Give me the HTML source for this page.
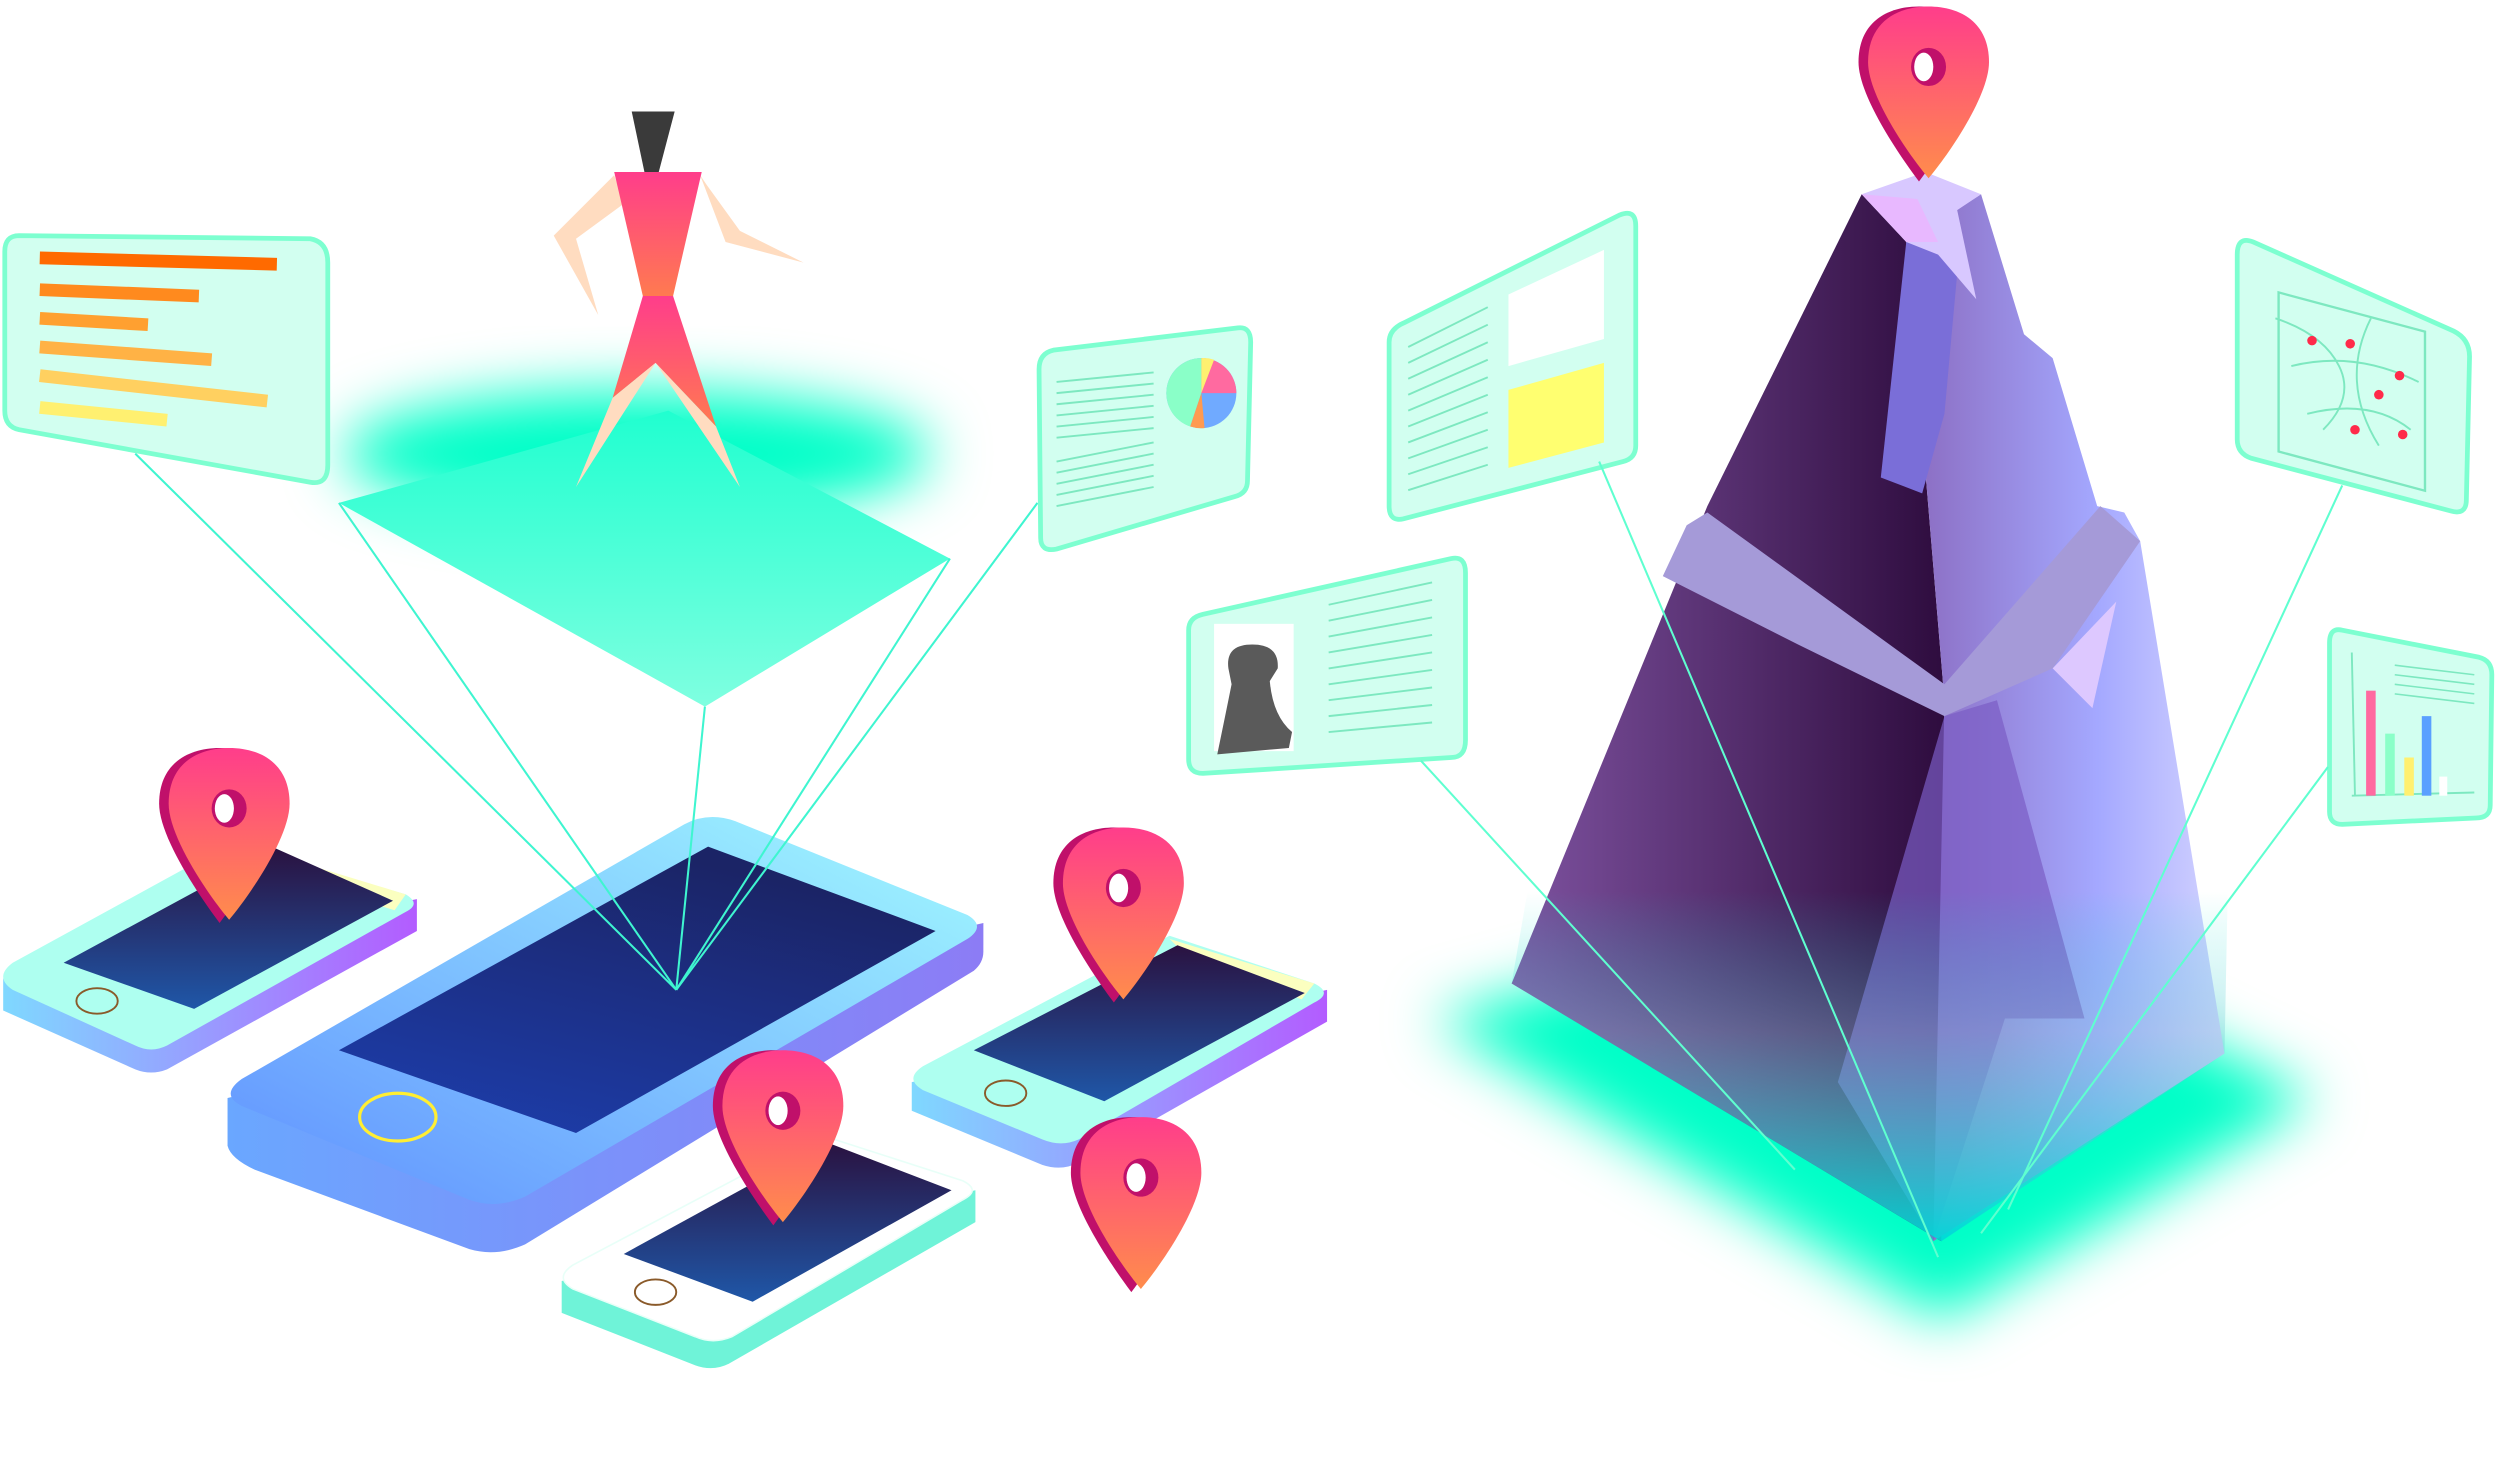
<!DOCTYPE html>
<html><head><meta charset="utf-8"><style>
html,body{margin:0;padding:0;background:#fff;width:2495px;height:1480px;overflow:hidden}
svg{display:block}
</style></head><body>
<svg width="2495" height="1480" viewBox="0 0 1568 930" xmlns="http://www.w3.org/2000/svg">
<defs>
<filter id="blur" x="-50%" y="-50%" width="200%" height="200%"><feGaussianBlur stdDeviation="18"/></filter>
<filter id="blur2" x="-50%" y="-50%" width="200%" height="200%"><feGaussianBlur stdDeviation="10"/></filter>
<linearGradient id="pin" x1="0" y1="0" x2="0" y2="1"><stop offset="0" stop-color="#ff3d8b"/><stop offset="1" stop-color="#ff8c4c"/></linearGradient>
<linearGradient id="screen" x1="0" y1="1" x2="0.5" y2="0"><stop offset="0" stop-color="#1d3fb0"/><stop offset="1" stop-color="#1b2466"/></linearGradient>
<linearGradient id="scr2" x1="0" y1="1" x2="0" y2="0"><stop offset="0" stop-color="#1f57a8"/><stop offset="1" stop-color="#2a1240"/></linearGradient>
<linearGradient id="tabSide" x1="0" y1="0" x2="1" y2="0"><stop offset="0" stop-color="#6aa7ff"/><stop offset="1" stop-color="#8c7cf5"/></linearGradient>
<linearGradient id="tabTop" x1="0" y1="1" x2="1" y2="0"><stop offset="0" stop-color="#5f8fff"/><stop offset="1" stop-color="#a2fbff"/></linearGradient>
<linearGradient id="phSide" x1="0" y1="0" x2="1" y2="0"><stop offset="0" stop-color="#7fd8ff"/><stop offset="1" stop-color="#b35cff"/></linearGradient>
<linearGradient id="dark" x1="0" y1="0" x2="1" y2="0"><stop offset="0" stop-color="#7e52a0"/><stop offset="1" stop-color="#2e0c3e"/></linearGradient>
<linearGradient id="light" x1="0" y1="0" x2="1" y2="0"><stop offset="0" stop-color="#8a6abf"/><stop offset="0.6" stop-color="#a4a8ff"/><stop offset="1" stop-color="#d4d4ff"/></linearGradient>
<linearGradient id="fade" x1="0" y1="0" x2="0" y2="1"><stop offset="0" stop-color="#00e5d0" stop-opacity="0"/><stop offset="0.4" stop-color="#7fc8d8" stop-opacity="0.35"/><stop offset="1" stop-color="#00d8d8" stop-opacity="0.95"/></linearGradient>
<linearGradient id="diam" x1="0" y1="0" x2="0" y2="1"><stop offset="0" stop-color="#20ffd0"/><stop offset="1" stop-color="#7fffe0"/></linearGradient>
<linearGradient id="fig" x1="0" y1="0" x2="0" y2="1"><stop offset="0" stop-color="#ff3d8b"/><stop offset="1" stop-color="#ff7a50"/></linearGradient>
<g id="pinG">
<path d="M-44,35 C-44,10 -26,0 -6,0 C14,0 32,10 32,35 C32,55 9,90 -6,110 C-21,90 -44,55 -44,35Z" fill="#c0106a"/>
<path d="M-38,35 C-38,10 -20,0 0,0 C20,0 38,10 38,35 C38,55 15,90 0,108 C-15,90 -38,55 -38,35Z" fill="url(#pin)"/>
<ellipse cx="0" cy="38" rx="11" ry="12" fill="#c0106a"/>
<ellipse cx="-3" cy="38" rx="6" ry="9" fill="#fff"/>
</g>
</defs>

<!-- left glow + diamond -->
<ellipse cx="400" cy="285" rx="185" ry="40" fill="#00ffc8" filter="url(#blur)"/>
<polygon points="213,316 420,258 597,351 443,444" fill="url(#diam)"/>

<!-- figure -->
<polygon points="397,70 424,70 414,108 405,108" fill="#3a3a3a"/>
<polygon points="386,110 348,148 376,198 362,150 392,128" fill="#ffdcc0"/>
<polygon points="440,110 456,152 505,165 465,145 444,116" fill="#ffdcc0"/>
<polygon points="386,108 441,108 423,186 404,186" fill="url(#fig)"/>
<polygon points="404,186 423,186 450,268 412,228 385,250" fill="url(#fig)"/>
<polygon points="385,250 412,228 362,306" fill="#ffdcc0"/>
<polygon points="412,228 450,268 465,306" fill="#ffdcc0"/>

<!-- mountain glow -->
<polygon points="900,640 1190,560 1455,690 1220,830" fill="#00ffc8" filter="url(#blur)"/>

<!-- mountain -->
<polygon points="1170,122 1198,152 1222,440 1220,780 950,618 1073,318" fill="url(#dark)"/>
<polygon points="1198,152 1245,122 1272,210 1290,225 1318,318 1335,322 1345,340 1398,662 1215,780 1222,440" fill="url(#light)"/>
<polygon points="1198,152 1232,150 1222,260 1208,310 1182,300" fill="#7a6ed8"/>
<polygon points="1222,450 1255,440 1310,640 1260,640 1215,780 1155,680" fill="#7b5cc4" opacity="0.7"/>
<polygon points="1045,362 1060,330 1073,322 1222,430 1320,318 1345,340 1290,420 1222,450 1130,405" fill="#a59ad8"/>
<polygon points="1290,420 1330,378 1315,445" fill="#ddc8ff"/>
<polygon points="1170,122 1210,108 1245,122 1230,132 1242,188 1218,160 1198,152" fill="#d8c8ff"/>
<polygon points="1170,122 1198,152 1218,152 1205,125" fill="#e8b8ff"/>
<polygon points="950,618 1220,780 1398,662 1400,560 960,560" fill="url(#fade)"/>
<use href="#pinG" x="1212" y="4"/>

<!-- left tablet -->
<path d="M143,690 L143,720 Q145,728 160,735 L295,785 Q312,790 330,782 L612,610 Q618,605 618,598 L618,580 Z" fill="url(#tabSide)"/>
<path d="M152,678 L430,518 Q445,510 462,516 L608,575 Q620,582 608,590 L330,752 Q312,760 295,754 L152,695 Q138,688 152,678Z" fill="url(#tabTop)"/>
<polygon points="213,660 445,532 588,585 362,712" fill="url(#screen)"/>
<ellipse cx="250" cy="702" rx="24" ry="15" fill="none" stroke="#ffee33" stroke-width="2"/>

<!-- left phone -->
<path d="M2,615 L2,635 L85,672 Q95,676 105,672 L262,585 L262,565Z" fill="url(#phSide)"/>
<path d="M8,605 L145,530 L255,562 Q265,568 255,573 L105,657 Q95,662 85,657 L8,622 Q-4,614 8,605Z" fill="#aefff0"/>
<polygon points="150,530 255,562 248,572 160,545" fill="#fbffc0"/>
<polygon points="40,605 173,533 247,566 122,634" fill="url(#scr2)"/>
<ellipse cx="61" cy="629" rx="13" ry="8" fill="none" stroke="#8a5a2a" stroke-width="1.2"/>

<!-- right phone -->
<path d="M573,680 L573,698 L655,732 Q667,736 677,731 L834,642 L834,622Z" fill="url(#phSide)"/>
<path d="M580,670 L735,588 L826,618 Q838,624 826,630 L678,716 Q667,721 655,716 L580,685 Q568,678 580,670Z" fill="#aefff0"/>
<polygon points="735,590 826,618 818,628 745,600" fill="#fbffc0"/>
<polygon points="612,660 740,594 820,624 694,692" fill="url(#scr2)"/>
<ellipse cx="632" cy="687" rx="13" ry="8" fill="none" stroke="#8a5a2a" stroke-width="1.2"/>

<!-- bottom phone -->
<path d="M353,805 L353,825 L437,858 Q448,862 458,857 L613,768 L613,748Z" fill="#6ff3d8"/>
<path d="M360,795 L515,713 L605,742 Q617,748 605,754 L460,840 Q448,845 437,840 L360,810 Q348,803 360,795Z" fill="#fff" stroke="#e8fff8" stroke-width="1"/>
<polygon points="392,788 520,718 598,748 473,818" fill="url(#scr2)"/>
<ellipse cx="412" cy="812" rx="13" ry="8" fill="none" stroke="#8a5a2a" stroke-width="1.2"/>

<!-- left lines -->
<g stroke="#3ff5d0" stroke-width="1.3" fill="none">
<line x1="85" y1="285" x2="425" y2="622"/>
<line x1="213" y1="316" x2="425" y2="622"/>
<line x1="597" y1="351" x2="425" y2="622"/>
<line x1="652" y1="316" x2="425" y2="622"/>
<line x1="443" y1="444" x2="425" y2="622"/>
</g>

<!-- pins -->
<use href="#pinG" x="144" y="470"/>
<use href="#pinG" x="706" y="520"/>
<use href="#pinG" x="492" y="660"/>
<use href="#pinG" x="717" y="702"/>

<!-- cards -->
<g stroke="#7dffd0" stroke-width="3" fill="#d2fff0">
<path d="M12,148 L195,150 Q206,152 206,165 L206,292 Q206,305 195,303 L12,270 Q3,268 3,258 L3,158 Q3,148 12,148Z"/>
<path d="M662,220 L778,206 Q786,205 786,215 L784,302 Q784,310 776,312 L664,345 Q654,347 654,338 L653,232 Q653,222 662,220Z"/>
<path d="M882,203 L1018,135 Q1028,131 1028,142 L1028,280 Q1028,288 1020,290 L882,326 Q873,328 873,318 L873,215 Q873,207 882,203Z"/>
<path d="M756,386 L912,351 Q921,349 921,360 L921,465 Q921,476 912,476 L756,486 Q747,486 747,477 L747,396 Q747,388 756,386Z"/>
<path d="M1416,152 L1542,208 Q1552,213 1552,224 L1550,314 Q1550,324 1540,321 L1415,288 Q1406,285 1406,276 L1406,160 Q1406,148 1416,152Z"/>
<path d="M1472,396 L1558,413 Q1566,415 1566,424 L1565,506 Q1565,514 1556,514 L1472,518 Q1464,518 1464,510 L1464,404 Q1464,394 1472,396Z"/>
</g>
<!-- card1 bars -->
<g stroke-width="8">
<line x1="25" y1="162" x2="174" y2="166" stroke="#ff6a00"/>
<line x1="25" y1="182" x2="125" y2="186" stroke="#ff8a1e"/>
<line x1="25" y1="200" x2="93" y2="204" stroke="#ffa030"/>
<line x1="25" y1="218" x2="133" y2="226" stroke="#ffb245"/>
<line x1="25" y1="236" x2="168" y2="252" stroke="#ffd060"/>
<line x1="25" y1="256" x2="105" y2="264" stroke="#fff070"/>
</g>
<!-- card2 -->
<g stroke="#7de8c0" stroke-width="1.2">
<line x1="664" y1="240" x2="725" y2="234"/><line x1="664" y1="247" x2="725" y2="241"/><line x1="664" y1="254" x2="725" y2="248"/><line x1="664" y1="261" x2="725" y2="255"/><line x1="664" y1="268" x2="725" y2="262"/><line x1="664" y1="275" x2="725" y2="269"/>
<line x1="664" y1="290" x2="725" y2="278"/><line x1="664" y1="297" x2="725" y2="285"/><line x1="664" y1="304" x2="725" y2="292"/><line x1="664" y1="311" x2="725" y2="299"/><line x1="664" y1="318" x2="725" y2="306"/>
</g>
<circle cx="755" cy="247" r="22" fill="#70aaff"/>
<path d="M755,247 L755,225 A22,22 0 0 1 777,247Z" fill="#ff6aa0"/>
<path d="M755,247 L748,268 A22,22 0 0 1 733,247 A22,22 0 0 1 755,225Z" fill="#8affc8"/>
<path d="M755,247 L748,268 A22,22 0 0 0 757,269Z" fill="#ff9a50"/>
<path d="M755,247 L755,225 A22,22 0 0 1 763,226Z" fill="#fff070"/>
<!-- card3 -->
<g stroke="#7de8c0" stroke-width="1.2">
<line x1="885" y1="218" x2="935" y2="193"/><line x1="885" y1="228" x2="935" y2="204"/><line x1="885" y1="238" x2="935" y2="215"/><line x1="885" y1="248" x2="935" y2="226"/><line x1="885" y1="258" x2="935" y2="237"/><line x1="885" y1="268" x2="935" y2="248"/><line x1="885" y1="278" x2="935" y2="259"/><line x1="885" y1="288" x2="935" y2="270"/><line x1="885" y1="298" x2="935" y2="281"/><line x1="885" y1="308" x2="935" y2="292"/>
</g>
<polygon points="948,185 1008,157 1008,213 948,230" fill="#fff"/>
<polygon points="948,245 1008,228 1008,278 948,294" fill="#ffff70"/>
<!-- card4 -->
<rect x="763" y="392" width="50" height="80" fill="#fff"/>
<path d="M772,420 Q770,405 787,405 Q804,405 803,420 L798,428 Q800,450 812,460 L810,470 L765,474 Q770,450 774,430 Z" fill="#5a5a5a"/>
<g stroke="#7de8c0" stroke-width="1.2">
<line x1="835" y1="380" x2="900" y2="366"/><line x1="835" y1="390" x2="900" y2="377"/><line x1="835" y1="400" x2="900" y2="388"/><line x1="835" y1="410" x2="900" y2="399"/><line x1="835" y1="420" x2="900" y2="410"/><line x1="835" y1="430" x2="900" y2="421"/><line x1="835" y1="440" x2="900" y2="432"/><line x1="835" y1="450" x2="900" y2="443"/><line x1="835" y1="460" x2="900" y2="454"/>
</g>
<!-- card5 map -->
<rect x="1432" y="185" width="92" height="100" fill="none" stroke="#7de8c0" stroke-width="1.5" transform="skewY(15) translate(0,-385)"/>
<g stroke="#7de8c0" stroke-width="1.2" fill="none">
<path d="M1430,200 Q1460,210 1470,230 Q1480,250 1460,270"/>
<path d="M1440,230 Q1480,220 1520,240"/>
<path d="M1450,260 Q1490,250 1515,270"/>
<path d="M1490,200 Q1470,240 1495,280"/>
</g>
<g fill="#ff2a4a"><circle cx="1453" cy="214" r="3"/><circle cx="1477" cy="216" r="3"/><circle cx="1508" cy="236" r="3"/><circle cx="1495" cy="248" r="3"/><circle cx="1480" cy="270" r="3"/><circle cx="1510" cy="273" r="3"/></g>
<!-- card6 chart -->
<line x1="1478" y1="410" x2="1480" y2="500" stroke="#7de8c0" stroke-width="1.2"/>
<line x1="1478" y1="500" x2="1555" y2="498" stroke="#7de8c0" stroke-width="1.2"/>
<rect x="1487" y="434" width="6" height="66" fill="#ff6aa0"/>
<rect x="1499" y="461" width="6" height="39" fill="#8affc8"/>
<rect x="1511" y="476" width="6" height="24" fill="#fff070"/>
<rect x="1522" y="450" width="6" height="50" fill="#5aa0ff"/>
<rect x="1533" y="488" width="5" height="12" fill="#fff"/>
<g stroke="#7de8c0" stroke-width="1"><line x1="1505" y1="418" x2="1555" y2="424"/><line x1="1505" y1="424" x2="1555" y2="430"/><line x1="1505" y1="430" x2="1555" y2="436"/><line x1="1505" y1="436" x2="1555" y2="442"/></g>

<!-- right lines -->
<g stroke="#5fffd0" stroke-width="1.3" fill="none">
<line x1="1005" y1="290" x2="1218" y2="790"/>
<line x1="893" y1="478" x2="1128" y2="735"/>
<line x1="1472" y1="305" x2="1262" y2="760"/>
<line x1="1463" y1="482" x2="1245" y2="775"/>
</g>
</svg>
</body></html>
